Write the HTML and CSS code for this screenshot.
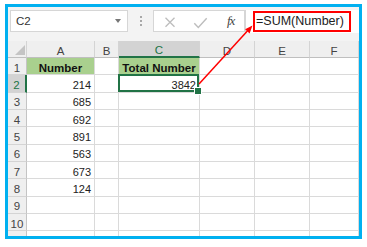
FILE: index.html
```html
<!DOCTYPE html>
<html lang="en">
<head>
    <meta charset="UTF-8">
    <title>SUM of a named range</title>
    <link rel="stylesheet" href="styles.css">
</head>
<body>
    <div class="frame">
        <div class="toolbar">
            <div class="namebox"><span>C2</span><span class="caret"></span></div>
            <div class="grip"><i></i><i></i><i></i></div>
            <div class="fbtns">
                <svg width="60" height="20" viewBox="0 0 60 20">
                    <path d="M11.5 6.7 L20.5 15.7 M20.5 6.7 L11.5 15.7" stroke="#bdbdbd" stroke-width="1.3" fill="none"/>
                    <path d="M40.3 12.3 L44.3 16.5 L52.7 7.3" stroke="#bdbdbd" stroke-width="1.4" fill="none"/>
                </svg>
                <span class="fx">fx</span>
            </div>
            <div class="formula"><span class="callout">=SUM(Number)</span></div>
        </div>

        <div class="sheet">
            <div class="row head">
                <div class="cell rh corner"><i></i></div>
                <div class="cell a">A</div>
                <div class="cell b">B</div>
                <div class="cell c on">C</div>
                <div class="cell d">D</div>
                <div class="cell e">E</div>
                <div class="cell f">F</div>
            </div>
            <div class="row">
                <div class="cell rh">1</div>
                <div class="cell a green title">Number</div>
                <div class="cell b"></div>
                <div class="cell c green title">Total Number</div>
                <div class="cell d"></div>
                <div class="cell e"></div>
                <div class="cell f"></div>
            </div>
            <div class="row">
                <div class="cell rh on">2</div>
                <div class="cell a num">214</div>
                <div class="cell b"></div>
                <div class="cell c num sel">3842</div>
                <div class="cell d"></div>
                <div class="cell e"></div>
                <div class="cell f"></div>
            </div>
            <div class="row">
                <div class="cell rh">3</div>
                <div class="cell a num">685</div>
                <div class="cell b"></div>
                <div class="cell c"></div>
                <div class="cell d"></div>
                <div class="cell e"></div>
                <div class="cell f"></div>
            </div>
            <div class="row">
                <div class="cell rh">4</div>
                <div class="cell a num">692</div>
                <div class="cell b"></div>
                <div class="cell c"></div>
                <div class="cell d"></div>
                <div class="cell e"></div>
                <div class="cell f"></div>
            </div>
            <div class="row">
                <div class="cell rh">5</div>
                <div class="cell a num">891</div>
                <div class="cell b"></div>
                <div class="cell c"></div>
                <div class="cell d"></div>
                <div class="cell e"></div>
                <div class="cell f"></div>
            </div>
            <div class="row">
                <div class="cell rh">6</div>
                <div class="cell a num">563</div>
                <div class="cell b"></div>
                <div class="cell c"></div>
                <div class="cell d"></div>
                <div class="cell e"></div>
                <div class="cell f"></div>
            </div>
            <div class="row">
                <div class="cell rh">7</div>
                <div class="cell a num">673</div>
                <div class="cell b"></div>
                <div class="cell c"></div>
                <div class="cell d"></div>
                <div class="cell e"></div>
                <div class="cell f"></div>
            </div>
            <div class="row">
                <div class="cell rh">8</div>
                <div class="cell a num">124</div>
                <div class="cell b"></div>
                <div class="cell c"></div>
                <div class="cell d"></div>
                <div class="cell e"></div>
                <div class="cell f"></div>
            </div>
            <div class="row">
                <div class="cell rh">9</div>
                <div class="cell a"></div>
                <div class="cell b"></div>
                <div class="cell c"></div>
                <div class="cell d"></div>
                <div class="cell e"></div>
                <div class="cell f"></div>
            </div>
            <div class="row">
                <div class="cell rh">10</div>
                <div class="cell a"></div>
                <div class="cell b"></div>
                <div class="cell c"></div>
                <div class="cell d"></div>
                <div class="cell e"></div>
                <div class="cell f"></div>
            </div>
            <div class="row">
                <div class="cell rh">11</div>
                <div class="cell a"></div>
                <div class="cell b"></div>
                <div class="cell c"></div>
                <div class="cell d"></div>
                <div class="cell e"></div>
                <div class="cell f"></div>
            </div>
        </div>
    </div>

    <!-- callout arrow from the cell to the formula -->
    <svg class="arrow" width="367" height="247" viewBox="0 0 367 247">
        <path d="M199 84 L247.6 30.8" stroke="#ff0000" stroke-width="1.5" fill="none"/>
        <path d="M252.5 25.5 L249.6 33.4 L245.1 29.2 Z" fill="#ff0000"/>
    </svg>
</body>
</html>
```

FILE: styles.css
```css
*{
    box-sizing:border-box;
}
body{
    margin:0;
    background:#fff;
    font-family:"Liberation Sans", Arial, sans-serif;
    position:relative;
}
    .frame{
        margin:4px 0 0 5px;
        width:357px;
        height:235px;
        border:3px solid #00b0f0;
        overflow:hidden;
        background:#fff;
    }
    .toolbar{
        display:flex;
        align-items:flex-start;
        height:34px;
        padding:3px 0 0 2px;
        background:#f3f3f3;
    }
    .namebox{
        width:118px;
        height:22px;
        display:flex;
        align-items:center;
        padding-left:5px;
        background:#fff;
        border:1px solid #d6d6d6;
        font-size:11.5px;
        color:#333;
    }
    .caret{
        margin-left:auto;
        margin-right:6px;
        width:0;
        height:0;
        border-left:3.5px solid transparent;
        border-right:3.5px solid transparent;
        border-top:4px solid #777;
    }
    .grip{
        width:25px;
        height:22px;
        display:flex;
        flex-direction:column;
        align-items:center;
        justify-content:center;
        gap:2px;
    }
    .grip i{
        width:2px;
        height:2px;
        background:#a8a8a8;
    }
    .fbtns{
        width:92px;
        height:22px;
        display:flex;
        align-items:center;
        background:#fff;
        border:1px solid #d6d6d6;
    }
    .fbtns svg{
        display:block;
    }
    .fx{
        margin-left:13px;
        font-family:"Liberation Serif", serif;
        font-style:italic;
        font-size:13px;
        letter-spacing:-1px;
        color:#444;
    }
    .formula{
        flex:1;
        height:23px;
        padding:1px 0 0 7px;
        background:#fff;
        border-left:1px solid #d6d6d6;
    }
    .callout{
        display:inline-block;
        height:21px;
        padding:0 5px 0 1px;
        line-height:17px;
        border:2px solid #ff0000;
        font-size:12.5px;
        color:#222;
    }

    .row{
        display:flex;
        height:17.33px;
    }
    .row.head{
        height:17px;
    }
    .cell{
        display:flex;
        align-items:center;
        justify-content:center;
        padding-top:3px;
        border-right:1px solid #dadada;
        border-bottom:1px solid #dadada;
        font-size:11px;
        color:#222;
    }
    .rh{ width:19px; }
    .a{ width:68px; }
    .b{ width:24px; }
    .c{ width:81px; }
    .d{ width:55px; }
    .e{ width:55px; }
    .f{ width:49px; }

    .head .cell{
        background:#efefef;
        border-right-color:#d4d4d4;
        border-bottom-color:#bfbfbf;
        font-size:11.5px;
        color:#444;
    }
    .rh{
        background:#efefef;
        border-right-color:#c4c4c4;
        border-bottom-color:#d4d4d4;
        font-size:11.5px;
        color:#444;
    }
    .head .cell.on{
        background:#d3d3d3;
        color:#217346;
        border-bottom:2px solid #217346;
    }
    .rh.on{
        background:#d3d3d3;
        color:#217346;
        border-right:2px solid #217346;
    }
    .corner{
        align-items:flex-end;
        justify-content:flex-end;
        padding:0 1px 2px 0;
    }
    .corner i{
        width:0;
        height:0;
        border-left:10px solid transparent;
        border-bottom:10px solid #c4c4c4;
    }

    .green{
        background:#a9d08e;
    }
    .title{
        font-size:11.5px;
        font-weight:bold;
        color:#111;
    }
    .num{
        justify-content:flex-end;
        padding-right:3px;
    }
    .sel{
        position:relative;
    }
    .sel::before{
        content:"";
        position:absolute;
        left:-1px;
        top:-1px;
        right:0;
        bottom:0;
        border:2px solid #217346;
    }
    .sel::after{
        content:"";
        position:absolute;
        right:-3px;
        bottom:-3px;
        width:6px;
        height:6px;
        background:#217346;
        border:1px solid #fff;
    }
    .arrow{
        position:absolute;
        left:0;
        top:0;
        pointer-events:none;
    }
```
